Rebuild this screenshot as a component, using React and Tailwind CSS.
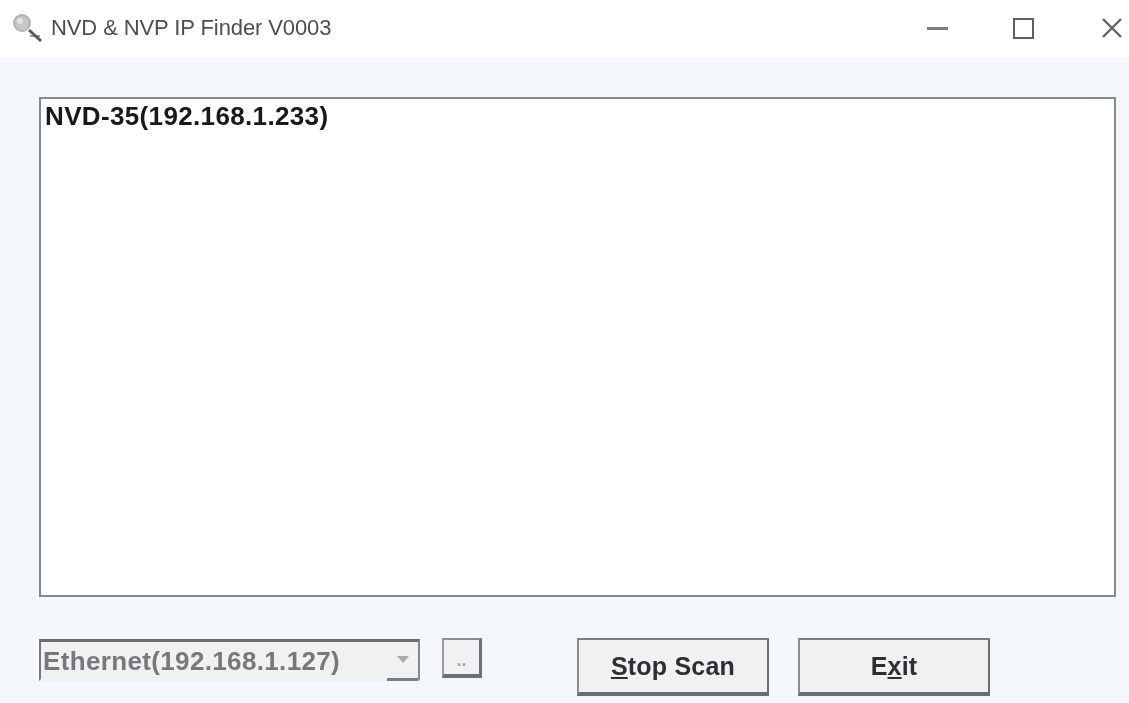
import React from 'react';

const App = () => {
  return (
    <div className="w-[1129px] h-[703px] flex flex-col bg-[#f4f7fc] overflow-hidden font-['Liberation_Sans',Arial,sans-serif] blur-[0.5px]">
      {/* Title bar */}
      <div className="h-[57px] shrink-0 bg-white flex items-center pl-[11px] pb-[1px]">
        <svg width="33" height="32" viewBox="0 0 33 32" className="shrink-0">
          <circle cx="11" cy="11" r="8" fill="#c4c6c8" stroke="#b0b2b4" strokeWidth="2" />
          <circle cx="9" cy="9" r="3" fill="#e4e5e6" />
          <path d="M19 24 H29" fill="none" stroke="#9a9c9e" strokeWidth="2" />
          <path d="M18 18 L30 29" fill="none" stroke="#55585a" strokeWidth="3" />
        </svg>
        <div className="ml-[7px] text-[22px] text-[#4b4f54] tracking-[-0.1px] leading-none">NVD &amp; NVP IP Finder V0003</div>
        <div className="ml-auto flex items-center">
          <div className="w-[21px] h-[3px] bg-[#7a7d80] mr-[65px]" />
          <div className="w-[21px] h-[21px] border-2 border-[#5d6063] mr-[68px]" />
          <svg width="20" height="20" viewBox="0 0 20 20" className="mr-[7px]">
            <path d="M1 1 L19 19 M19 1 L1 19" stroke="#606366" strokeWidth="2.4" />
          </svg>
        </div>
      </div>

      {/* List */}
      <div className="ml-[39px] mt-[40px] w-[1077px] h-[500px] shrink-0 bg-white border-2 border-[#85888c] pl-[4px] pt-[1px]">
        <div className="text-[26px] font-bold text-[#17191c] leading-[32px] tracking-[0.35px]">NVD-35(192.168.1.233)</div>
      </div>

      {/* Bottom controls */}
      <div className="flex items-start ml-[39px] mt-[42px]">
        <div className="w-[381px] h-[42px] flex items-center bg-[#f0f1f1] border-t-[3px] border-l-2 border-r-2 border-b-2 border-t-[#6b6e71] border-l-[#777a7d] border-r-[#86898c] border-b-[#f0f1f1] pl-[2px]">
          <span className="text-[26px] font-bold text-[#76797c] tracking-[0.35px] leading-none">Ethernet(192.168.1.127)</span>
          <div className="ml-auto w-[31px] h-[39px] -mb-[2px] border-b-[3px] border-[#7a7d80] flex items-center justify-center">
            <svg width="14" height="8" viewBox="0 0 14 8">
              <path d="M1 0 H13 L7 7 Z" fill="#a8abad" />
            </svg>
          </div>
        </div>

        <div className="ml-[22px] -mt-[1px] w-[40px] h-[40px] bg-[#eff1f3] border-2 border-t-[#8b8e91] border-l-[#9a9da0] border-r-[#6f7275] border-r-[3px] border-b-[#6f7275] border-b-[4px] flex items-center justify-center">
          <span className="text-[18px] font-bold text-[#a0a3a6] leading-none mt-[6px]">..</span>
        </div>

        <button className="ml-[95px] w-[192px] h-[58px] -mt-[1px] pt-[2px] bg-[#f1f1f1] border-2 border-t-[#7b7e81] border-l-[#8a8d90] border-r-[#6a6d70] border-b-[#6a6d70] border-b-[4px] text-[25px] font-bold text-[#2c2f33] tracking-[0.2px]">
          <span className="underline underline-offset-2">S</span>top Scan
        </button>

        <button className="ml-[29px] w-[192px] h-[58px] -mt-[1px] pt-[2px] bg-[#f1f1f1] border-2 border-t-[#7b7e81] border-l-[#8a8d90] border-r-[#6a6d70] border-b-[#6a6d70] border-b-[4px] text-[25px] font-bold text-[#2c2f33] tracking-[0.2px]">
          E<span className="underline underline-offset-2">x</span>it
        </button>
      </div>
    </div>
  );
};

export default App;
